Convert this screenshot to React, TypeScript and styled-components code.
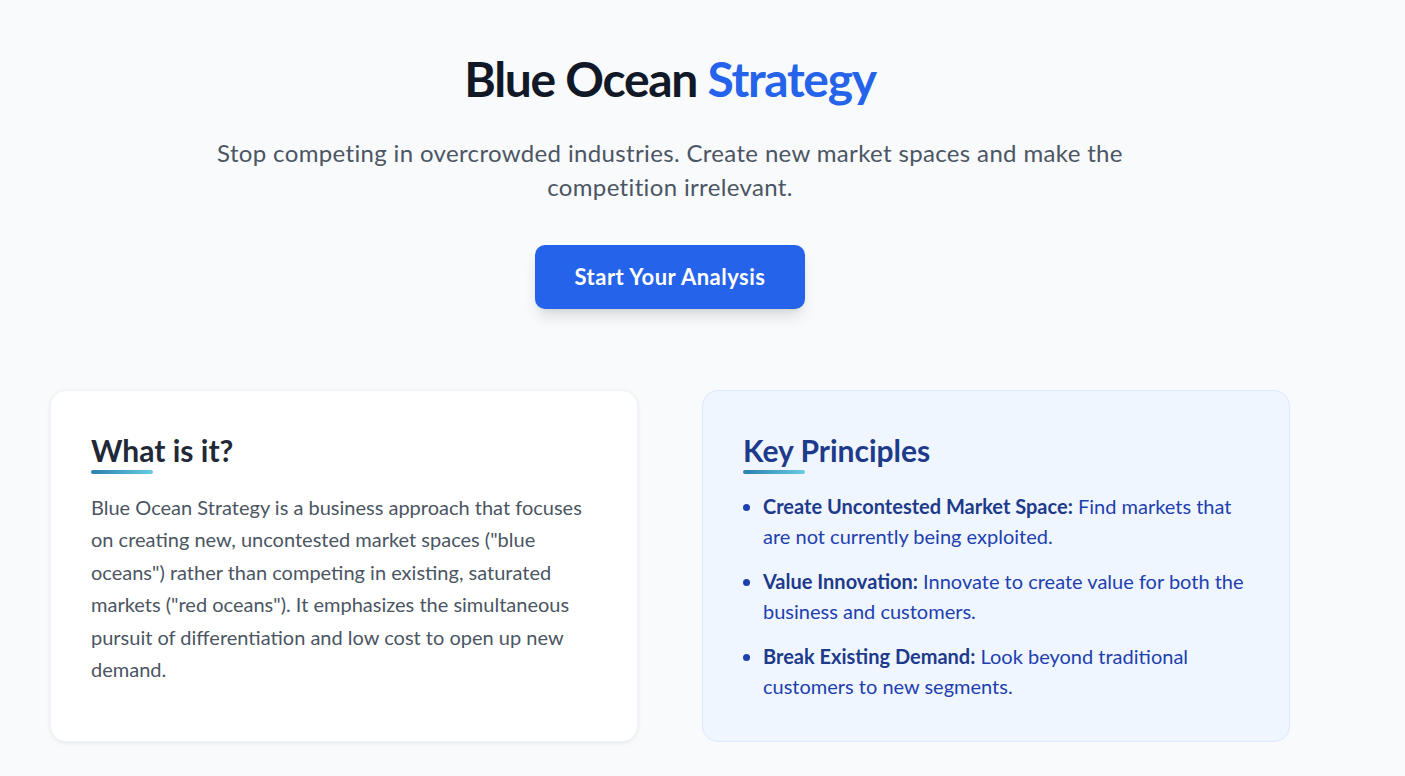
import React from 'react';
import styled, { createGlobalStyle } from 'styled-components';

const GlobalStyle = createGlobalStyle`
  * { box-sizing: border-box; }
  body {
    margin: 0;
    background: #f8fafc;
    font-family: Lato, "Noto Sans", sans-serif;
  }
`;

const Page = styled.main`
  width: 1340px;
  padding: 50px 50px 34px;
`;

const Hero = styled.section`
  display: flex;
  flex-direction: column;
  align-items: center;
  text-align: center;
`;

const Title = styled.h1`
  margin: 0;
  font-size: 48px;
  line-height: 1.2;
  font-weight: 700;
  letter-spacing: -1.3px;
  color: #111827;
`;

const Accent = styled.span`
  color: #2563eb;
`;

const Subtitle = styled.p`
  margin: 28px 0 0;
  max-width: 960px;
  font-size: 24px;
  line-height: 34px;
  letter-spacing: 0.35px;
  color: #4b5563;
`;

const CtaButton = styled.button`
  margin-top: 41px;
  width: 270px;
  height: 64px;
  border: none;
  border-radius: 10px;
  background: #2563eb;
  color: #fff;
  font-family: inherit;
  font-size: 22px;
  font-weight: 700;
  letter-spacing: 0.5px;
  box-shadow: 0 10px 15px -3px rgba(0, 0, 0, 0.12), 0 4px 6px -4px rgba(0, 0, 0, 0.1);
  cursor: pointer;
`;

const Grid = styled.section`
  margin-top: 81px;
  display: grid;
  grid-template-columns: 1fr 1fr;
  gap: 64px;
`;

const Card = styled.div<{ $tinted?: boolean }>`
  padding: 41px 40px 40px;
  border-radius: 16px;
  background: ${p => (p.$tinted ? '#eff6ff' : '#ffffff')};
  border: 1px solid ${p => (p.$tinted ? '#dbeafe' : '#f1f5f9')};
  box-shadow: ${p => (p.$tinted ? 'none' : '0 1px 4px rgba(15, 23, 42, 0.08)')};
`;

const CardTitle = styled.h2<{ $tinted?: boolean }>`
  position: relative;
  margin: 0 0 23px;
  font-size: 30px;
  line-height: 36px;
  font-weight: 700;
  color: ${p => (p.$tinted ? '#1e3a8a' : '#1f2937')};

  &::after {
    content: '';
    position: absolute;
    left: 0;
    bottom: -6px;
    width: 62px;
    height: 4px;
    border-radius: 2px;
    background: linear-gradient(90deg, #2b7fae, #67cbe6);
  }
`;

const Body = styled.p`
  margin: 0;
  font-size: 20px;
  line-height: 32.5px;
  color: #4b5563;
`;

const List = styled.ul`
  margin: 0;
  padding-left: 20px;
  display: flex;
  flex-direction: column;
  gap: 15px;
  color: #1e40af;
`;

const Item = styled.li`
  font-size: 20px;
  line-height: 30px;
`;

const Strong = styled.strong`
  font-weight: 700;
  color: #1e3a8a;
`;

const principles = [
  { name: 'Create Uncontested Market Space:', text: 'Find markets that are not currently being exploited.' },
  { name: 'Value Innovation:', text: 'Innovate to create value for both the business and customers.' },
  { name: 'Break Existing Demand:', text: 'Look beyond traditional customers to new segments.' },
];

export default function App() {
  return (
    <>
      <GlobalStyle />
      <Page>
        <Hero>
          <Title>
            Blue Ocean <Accent>Strategy</Accent>
          </Title>
          <Subtitle>
            Stop competing in overcrowded industries. Create new market spaces and make the competition irrelevant.
          </Subtitle>
          <CtaButton>Start Your Analysis</CtaButton>
        </Hero>
        <Grid>
          <Card>
            <CardTitle>What is it?</CardTitle>
            <Body>
              Blue Ocean Strategy is a business approach that focuses on creating new, uncontested market spaces
              ("blue oceans") rather than competing in existing, saturated markets ("red oceans"). It emphasizes the
              simultaneous pursuit of differentiation and low cost to open up new demand.
            </Body>
          </Card>
          <Card $tinted>
            <CardTitle $tinted>Key Principles</CardTitle>
            <List>
              {principles.map(p => (
                <Item key={p.name}>
                  <Strong>{p.name}</Strong> {p.text}
                </Item>
              ))}
            </List>
          </Card>
        </Grid>
      </Page>
    </>
  );
}
